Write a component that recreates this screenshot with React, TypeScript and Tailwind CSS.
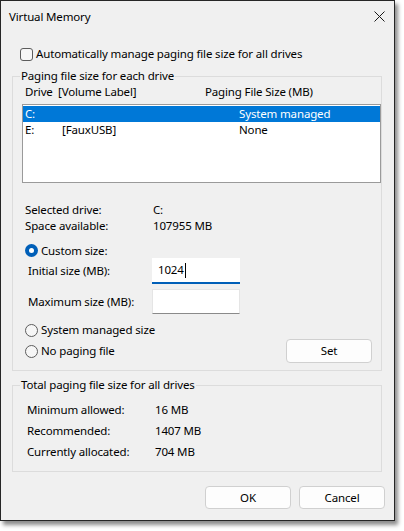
import React from "react";

const font = { fontFamily: '"Noto Sans", "Segoe UI", sans-serif' };

function Radio({ checked }: { checked?: boolean }) {
  if (checked) {
    return (
      <span className="flex h-[13px] w-[13px] shrink-0 items-center justify-center rounded-full bg-[#005fb8]">
        <span className="h-[5px] w-[5px] rounded-full bg-white" />
      </span>
    );
  }
  return <span className="h-[13px] w-[13px] shrink-0 rounded-full border border-[#5c5c5c] bg-[#f6f6f6]" />;
}

function Button({ label, className = "" }: { label: string; className?: string }) {
  return (
    <button
      className={
        "flex h-[23px] w-[86px] items-center justify-center rounded-[4px] border border-[#d0d0d0] bg-[#fdfdfd] text-black " +
        className
      }
    >
      {label}
    </button>
  );
}

export default function App() {
  const totals = [
    ["Minimum allowed:", "16 MB"],
    ["Recommended:", "1407 MB"],
    ["Currently allocated:", "704 MB"],
  ];

  return (
    <div className="h-[531px] w-[404px] bg-white" style={font}>
      <div className="flex h-[521px] w-[395px] flex-col border border-[#262626] bg-[#f0f0f0] text-[11.5px] leading-[16px] tracking-[-0.15px] text-black shadow-[3px_4px_4px_rgba(0,0,0,0.45)]">
        {/* Title bar */}
        <div className="flex h-[30px] shrink-0 items-center justify-between pl-[8px] pr-[8px]">
          <span className="pt-[1px]">Virtual Memory</span>
          <svg width="11" height="11" viewBox="0 0 11 11" className="mr-[1px]">
            <path d="M0.5 0.5 L10.5 10.5 M10.5 0.5 L0.5 10.5" stroke="#1a1a1a" strokeWidth="1" />
          </svg>
        </div>

        {/* Auto manage checkbox */}
        <div className="mt-[16px] flex h-[14px] items-center pl-[19px]">
          <span className="h-[13px] w-[13px] shrink-0 rounded-[3px] border border-[#5c5c5c] bg-[#f6f6f6]" />
          <span className="ml-[3px]">Automatically manage paging file size for all drives</span>
        </div>

        {/* Paging file size for each drive */}
        <fieldset className="ml-[11px] mt-[7px] w-[370px] border border-[#dcdcdc] pb-[7px]">
          <legend className="ml-[7px] px-[1px] leading-[16px]">Paging file size for each drive</legend>
          <div className="flex h-[16px] items-center pl-[12px]">
            <span className="w-[33px]">Drive</span>
            <span className="w-[147px]">[Volume Label]</span>
            <span>Paging File Size (MB)</span>
          </div>
          <div className="ml-[9px] mt-[4px] h-[79px] w-[359px] border border-[#9a9a9a] bg-white pt-[1px]">
            <div className="flex h-[16px] items-center bg-[#0078d7] pl-[2px] text-white">
              <span className="w-[214px]">C:</span>
              <span>System managed</span>
            </div>
            <div className="flex h-[16px] items-center pl-[2px]">
              <span className="w-[37px]">E:</span>
              <span className="w-[177px]">[FauxUSB]</span>
              <span>None</span>
            </div>
          </div>

          <div className="mt-[19px] pl-[12px]">
            <div className="flex h-[16px] items-center">
              <span className="w-[128px]">Selected drive:</span>
              <span>C:</span>
            </div>
            <div className="flex h-[16px] items-center">
              <span className="w-[128px]">Space available:</span>
              <span>107955 MB</span>
            </div>
          </div>

          <div className="mt-[9px] flex h-[15px] items-center pl-[12px]">
            <Radio checked />
            <span className="ml-[3px]">Custom size:</span>
          </div>
          <div className="flex h-[26px] items-center pl-[15px]">
            <span className="w-[124px]">Initial size (MB):</span>
            <div className="flex h-[26px] w-[88px] items-center border-b-2 border-b-[#005fb8] bg-white pl-[6px]">
              <span>1024</span>
              <span className="ml-px inline-block h-[15px] w-px bg-black" />
            </div>
          </div>
          <div className="mt-[5px] flex h-[25px] items-center pl-[15px]">
            <span className="w-[124px]">Maximum size (MB):</span>
            <div className="h-[25px] w-[88px] border border-[#e5e5e5] border-b-[#8a8a8a] bg-white" />
          </div>

          <div className="mt-[8px] flex h-[16px] items-center pl-[12px]">
            <Radio />
            <span className="ml-[3px]">System managed size</span>
          </div>
          <div className="mt-[1px] flex h-[24px] items-center pl-[12px] pr-[9px]">
            <Radio />
            <span className="ml-[3px]">No paging file</span>
            <Button label="Set" className="ml-auto h-[24px] border-[#27466b]" />
          </div>
        </fieldset>

        {/* Totals */}
        <fieldset className="ml-[11px] mt-[6px] w-[370px] border border-[#dcdcdc] pb-[9px]">
          <legend className="ml-[7px] px-[1px] leading-[16px]">Total paging file size for all drives</legend>
          <div className="mt-[6px] pl-[14px]">
            {totals.map(([label, value]) => (
              <div key={label} className="flex h-[21px] items-center">
                <span className="w-[128px]">{label}</span>
                <span>{value}</span>
              </div>
            ))}
          </div>
        </fieldset>

        <div className="mt-[14px] flex justify-end gap-[8px] pr-[9px]">
          <Button label="OK" />
          <Button label="Cancel" />
        </div>
      </div>
    </div>
  );
}
